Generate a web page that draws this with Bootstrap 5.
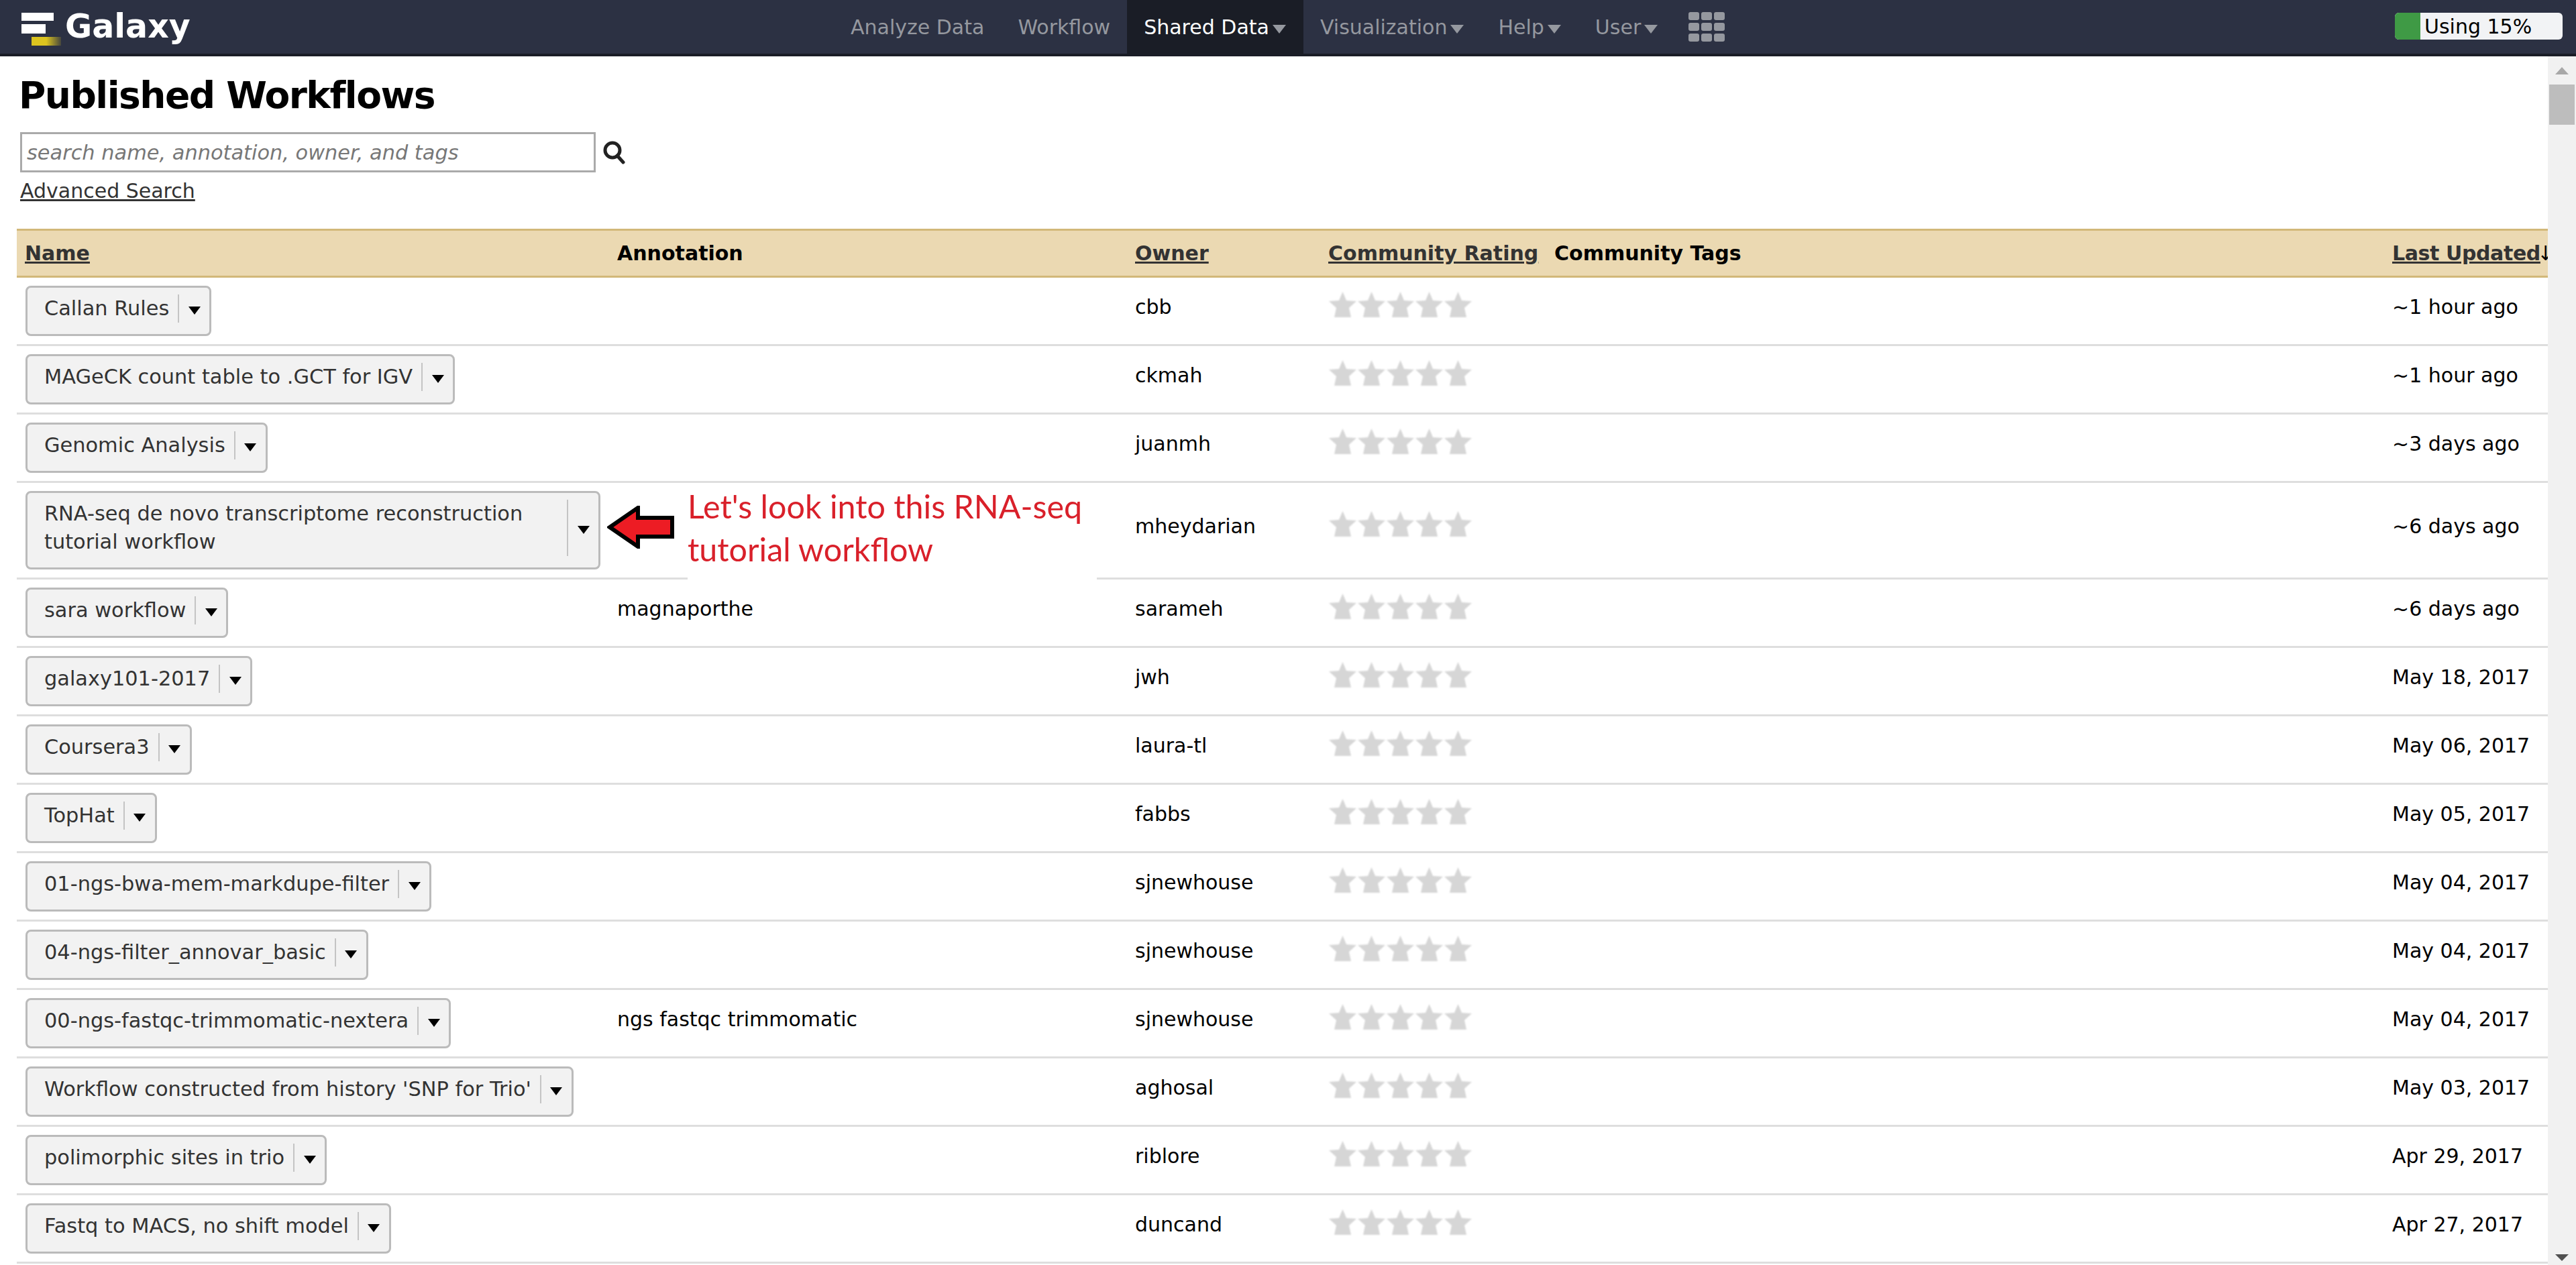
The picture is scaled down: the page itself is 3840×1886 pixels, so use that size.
<!DOCTYPE html>
<html lang="en">
<head>
    <meta charset="UTF-8">
    <title>Published Workflows</title>
    <link href="https://cdn.jsdelivr.net/npm/bootstrap@5.3.2/dist/css/bootstrap.min.css" rel="stylesheet">
    <style>
        html, body { height: 100%; overflow: hidden; }
        body { font-family: "DejaVu Sans", Verdana, sans-serif; font-size: 30px; color: #000; background: #fff; }

        /* top bar */
        .gx-bar { height: 84px; background: #2c3143; border-bottom: 4px solid #1a1d26; }
        .gx-brand { width: 1243px; padding-left: 32px; gap: 5px; color: #fff; font-weight: 700; font-size: 49px; line-height: 80px; }
        .gx-link { height: 84px; padding: 0 25px; line-height: 81px; color: #95989f; white-space: nowrap; text-decoration: none; }
        .gx-link.active { background: #1a1d26; color: #fff; }
        .gx-arrow { display: inline-block; margin: 0 1px 0 5px; vertical-align: 1px; border-left: 10px solid transparent; border-right: 10px solid transparent; border-top: 13px solid #95989f; }
        .gx-grid { display: grid; grid-template-columns: repeat(3, 16px); gap: 4px 3px; margin: 18px 0 0 20px; }
        .gx-grid span { height: 12px; background: #95989f; border-radius: 3px; }
        .gx-quota { width: 250px; height: 40px; margin: 19px 20px 0 auto; background: #f2f3f5; border-radius: 6px; overflow: hidden; line-height: 42px; }
        .gx-quota-fill { width: 38px; background: #3f9a45; margin-right: 6px; }

        /* page */
        .gx-body { height: calc(100% - 84px); }
        .gx-main { min-width: 0; position: relative; overflow: hidden; padding-left: 25px; }
        .gx-title { font-size: 55px; letter-spacing: -1.5px; font-weight: 700; margin: 0; padding: 20px 0 0 3px; line-height: 76px; }
        .gx-search { padding: 17px 0 0 5px; gap: 10px; }
        .gx-search input { width: 858px; height: 60px; border: 3px solid #aaa; padding: 0 7px; font-style: italic; font-size: 30.4px; font-family: inherit; outline: none; }
        .gx-search input::placeholder { color: #777; opacity: 1; }
        .gx-adv { display: inline-block; margin: 8px 0 0 5px; line-height: 40px; color: #333; text-decoration: underline; }

        /* grid table */
        .gx-table { table-layout: fixed; width: 3773px; margin-top: 34px; border-collapse: collapse; }
        .gx-table th { height: 70px; padding: 0 12px; background: #ebd9b2; border-top: 3px solid #d2b879; border-bottom: 3px solid #d2b879; font-weight: 700; white-space: nowrap; }
        .gx-table th a { color: #333; text-decoration: underline; }
        .gx-table th a.gx-updated { letter-spacing: -.4px; }
        .gx-sort { margin-left: -5px; font-weight: 400; }
        .gx-table td { padding: 0 12px 12px; border-bottom: 3px solid #dedede; vertical-align: middle; white-space: nowrap; height: 102px; }
        .gx-table td.gx-name { padding: 12px 13px 12px; white-space: normal; vertical-align: top; }
        .gx-btn { display: inline-flex; vertical-align: top; background: #f2f2f2; border: 3px solid #bbb; border-radius: 8px; padding: 10px 0 17px 25px; color: #333; font-size: 30.4px; line-height: 42px; }
        .gx-sep { flex: none; width: 47px; margin-left: 13px; border-left: 2px solid #c4c4c4; display: flex; align-items: center; justify-content: center; }
        .gx-caret { border-left: 9px solid transparent; border-right: 9px solid transparent; border-top: 12px solid #000; margin-top: 6px; }
        .gx-stars { margin-bottom: 7px; }
        .gx-stars svg { display: block; filter: blur(.8px); }

        /* note laid over the table */
        .gx-note { position: absolute; left: 905px; top: 638px; display: flex; gap: 18px; align-items: flex-start; }
        .gx-note svg { margin-top: 32px; }
        .gx-note-text { background: #fff; width: 610px; height: 146px; color: #d9202a; font-family: Lato, "Liberation Sans", sans-serif; font-size: 48.4px; line-height: 64px; white-space: nowrap; }

        /* scrollbar */
        .gx-scroll { width: 42px; flex: none; background: #f1f1f1; }
        .gx-scroll-up { margin: 16px auto 0; width: 0; border-left: 10px solid transparent; border-right: 10px solid transparent; border-bottom: 11px solid #a8a8a8; }
        .gx-thumb { height: 60px; margin: 15px 2px 0; background: #bdbdbd; }
        .gx-scroll-down { margin: auto auto 6px; width: 0; border-left: 10px solid transparent; border-right: 10px solid transparent; border-top: 10px solid #505050; }
    </style>
</head>
<body>

<nav class="gx-bar d-flex align-items-start">
    <div class="gx-brand d-flex align-items-center">
        <svg width="60" height="56" viewBox="0 0 60 56">
            <defs>
                <linearGradient id="logoFade" x1="0" x2="1" y1="0" y2="0">
                    <stop offset="0.5" stop-color="#dcc41f"/>
                    <stop offset="1" stop-color="#dcc41f" stop-opacity="0.15"/>
                </linearGradient>
            </defs>
            <rect x="0" y="7" width="48" height="12" fill="#fff"/>
            <rect x="0" y="24" width="36" height="14" fill="#fff"/>
            <rect x="15" y="43" width="44" height="13" fill="url(#logoFade)"/>
        </svg>
        <span>Galaxy</span>
    </div>
    <div class="d-flex align-items-start" id="menuArea"></div>
    <div class="gx-grid" id="appGrid"></div>
    <div class="gx-quota d-flex">
        <div class="gx-quota-fill"></div>
        <span>Using 15%</span>
    </div>
</nav>

<div class="gx-body d-flex">
    <div class="gx-main flex-grow-1">
        <h2 class="gx-title">Published Workflows</h2>
        <div class="gx-search d-flex align-items-center">
            <input type="text" placeholder="search name, annotation, owner, and tags">
            <svg width="36" height="36" viewBox="0 0 36 36" fill="none" stroke="#222" stroke-width="5">
                <circle cx="15" cy="15" r="11"/>
                <path d="M22 23 L31 33" stroke-linecap="round"/>
            </svg>
        </div>
        <a class="gx-adv" href="#">Advanced Search</a>

        <table class="gx-table">
            <colgroup>
                <col style="width:883px"><col style="width:772px"><col style="width:288px">
                <col style="width:337px"><col style="width:1249px"><col style="width:244px">
            </colgroup>
            <thead>
            <tr>
                <th><a href="#">Name</a></th>
                <th>Annotation</th>
                <th><a href="#">Owner</a></th>
                <th><a href="#">Community Rating</a></th>
                <th>Community Tags</th>
                <th><a class="gx-updated" href="#">Last Updated</a><span class="gx-sort">↓</span></th>
            </tr>
            </thead>
            <tbody id="workflowRows"></tbody>
        </table>

        <div class="gx-note">
            <svg width="102" height="64" viewBox="0 0 102 64">
                <path d="M4 32 L46 3 L46 18 L97 18 L97 46 L46 46 L46 61 Z" fill="#ed1c24" stroke="#000" stroke-width="6" stroke-linejoin="miter"/>
            </svg>
            <div class="gx-note-text">Let's look into this RNA-seq<br>tutorial workflow</div>
        </div>
    </div>
    <div class="gx-scroll d-flex flex-column">
        <div class="gx-scroll-up"></div>
        <div class="gx-thumb"></div>
        <div class="gx-scroll-down"></div>
    </div>
</div>

<script>
    const menus = [
        ['Analyze Data', false, false],
        ['Workflow', false, false],
        ['Shared Data', true, true],
        ['Visualization', true, false],
        ['Help', true, false],
        ['User', true, false]
    ];

    const workflows = [
        ['Callan Rules', '', 'cbb', '~1 hour ago'],
        ['MAGeCK count table to .GCT for IGV', '', 'ckmah', '~1 hour ago'],
        ['Genomic Analysis', '', 'juanmh', '~3 days ago'],
        ['RNA-seq de novo transcriptome reconstruction tutorial workflow', '', 'mheydarian', '~6 days ago'],
        ['sara workflow', 'magnaporthe', 'sarameh', '~6 days ago'],
        ['galaxy101-2017', '', 'jwh', 'May 18, 2017'],
        ['Coursera3', '', 'laura-tl', 'May 06, 2017'],
        ['TopHat', '', 'fabbs', 'May 05, 2017'],
        ['01-ngs-bwa-mem-markdupe-filter', '', 'sjnewhouse', 'May 04, 2017'],
        ['04-ngs-filter_annovar_basic', '', 'sjnewhouse', 'May 04, 2017'],
        ['00-ngs-fastqc-trimmomatic-nextera', 'ngs fastqc trimmomatic', 'sjnewhouse', 'May 04, 2017'],
        ["Workflow constructed from history 'SNP for Trio'", '', 'aghosal', 'May 03, 2017'],
        ['polimorphic sites in trio', '', 'riblore', 'Apr 29, 2017'],
        ['Fastq to MACS, no shift model', '', 'duncand', 'Apr 27, 2017']
    ];

    const star = `<svg width="43" height="38" viewBox="0 0 43 38"><path d="M21.5 0 L27 13 L42 14 L31 24 L34 38 L9 38 L12 24 L1 14 L16 13 Z" fill="#d6d6d6"/></svg>`;

    document.getElementById('menuArea').innerHTML = menus.map(m =>
        `<a class="gx-link ${m[2] ? 'active' : ''}" href="#">${m[0]}${m[1] ? '<span class="gx-arrow"></span>' : ''}</a>`
    ).join('');

    document.getElementById('appGrid').innerHTML = '<span></span>'.repeat(9);

    document.getElementById('workflowRows').innerHTML = workflows.map(w => `
        <tr>
            <td class="gx-name"><div class="gx-btn"><span>${w[0]}</span><span class="gx-sep"><span class="gx-caret"></span></span></div></td>
            <td>${w[1]}</td>
            <td>${w[2]}</td>
            <td><div class="gx-stars d-flex">${star.repeat(5)}</div></td>
            <td></td>
            <td>${w[3]}</td>
        </tr>`).join('');
</script>

<script src="https://cdn.jsdelivr.net/npm/bootstrap@5.3.2/dist/js/bootstrap.bundle.min.js"></script>
</body>
</html>
